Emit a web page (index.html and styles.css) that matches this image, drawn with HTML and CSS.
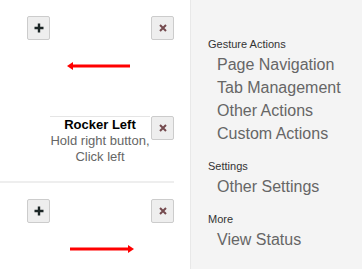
FILE: index.html
```html
<!DOCTYPE html>
<html lang="en">
<head>
    <meta charset="UTF-8">
    <title>Gestures</title>
    <link rel="stylesheet" href="styles.css">
</head>
<body>
    <main class="gestures">
        <section class="gesture">
            <div class="controls">
                <button class="btn" title="Add">
                    <svg width="10" height="10" viewBox="0 0 10 10"><path d="M5 0.5v9M0.5 5h9" stroke="#1c2626" stroke-width="2.4"/></svg>
                </button>
                <button class="btn" title="Remove">
                    <svg width="8" height="8" viewBox="0 0 8 8"><path d="M1 1l6 6M7 1l-6 6" stroke="#744a4e" stroke-width="2"/></svg>
                </button>
            </div>
            <svg class="arrow arrow-left" width="64" height="10" viewBox="0 0 64 10">
                <path d="M5 5H63" stroke="#f00" stroke-width="3"/>
                <path d="M0 5L6 1V9Z" fill="#f00"/>
            </svg>
            <div class="card-row">
                <div class="card">
                    <div class="card-title">Rocker Left</div>
                    <div class="card-desc">Hold right button,<br>Click left</div>
                </div>
                <button class="btn" title="Remove">
                    <svg width="8" height="8" viewBox="0 0 8 8"><path d="M1 1l6 6M7 1l-6 6" stroke="#744a4e" stroke-width="2"/></svg>
                </button>
            </div>
        </section>
        <hr class="separator">
        <section class="gesture">
            <div class="controls">
                <button class="btn" title="Add">
                    <svg width="10" height="10" viewBox="0 0 10 10"><path d="M5 0.5v9M0.5 5h9" stroke="#1c2626" stroke-width="2.4"/></svg>
                </button>
                <button class="btn" title="Remove">
                    <svg width="8" height="8" viewBox="0 0 8 8"><path d="M1 1l6 6M7 1l-6 6" stroke="#744a4e" stroke-width="2"/></svg>
                </button>
            </div>
            <svg class="arrow arrow-right" width="64" height="10" viewBox="0 0 64 10">
                <path d="M0 5H58" stroke="#f00" stroke-width="3"/>
                <path d="M64 5L58 1V9Z" fill="#f00"/>
            </svg>
        </section>
    </main>
    <nav class="sidebar">
        <h3>Gesture Actions</h3>
        <ul>
            <li>Page Navigation</li>
            <li>Tab Management</li>
            <li>Other Actions</li>
            <li>Custom Actions</li>
        </ul>
        <h3>Settings</h3>
        <ul>
            <li>Other Settings</li>
        </ul>
        <h3>More</h3>
        <ul>
            <li>View Status</li>
        </ul>
    </nav>
</body>
</html>
```

FILE: styles.css
```css
body {
    font-family: "Liberation Sans", Arial, sans-serif;
    margin: 0;
    padding: 0;
    display: flex;
    min-height: 100vh;
    background-color: #fff;
}
.gestures {
    width: 190px;
}
.gesture {
    padding: 16px 16px 0 27px;
}
.controls {
    display: flex;
    justify-content: space-between;
}
.btn {
    width: 23px;
    height: 24px;
    box-sizing: border-box;
    padding: 0;
    border: 1px solid #ccc;
    border-radius: 2px;
    background-color: #eee;
    display: flex;
    align-items: center;
    justify-content: center;
}
.arrow {
    display: block;
    margin-top: 21px;
}
.arrow-left {
    margin-left: 40px;
}
.arrow-right {
    margin-left: 43px;
}
.card-row {
    display: flex;
    justify-content: flex-end;
    align-items: flex-start;
    gap: 1px;
    margin-top: 45px;
}
.card {
    width: 100px;
    border-top: 1px solid #e5e5e5;
    text-align: center;
    font-size: 13px;
    line-height: 16px;
}
.card-title {
    font-weight: bold;
    color: #000;
}
.card-desc {
    color: #666;
}
.separator {
    width: 174px;
    margin: 16px 0 0 0;
    border: 0;
    border-top: 2px solid #eee;
}
.sidebar {
    flex: 1;
    background-color: #f4f4f4;
    border-left: 1px solid #e8e8e8;
    padding: 23px 0 0 17px;
}
.sidebar h3 {
    margin: 14px 0 2px 0;
    font-size: 11px;
    line-height: 14px;
    font-weight: normal;
    color: #333;
}
.sidebar ul {
    list-style: none;
    margin: 0;
    padding: 0 0 0 9px;
}
.sidebar li {
    font-size: 16px;
    line-height: 23px;
    color: #666;
}
```
